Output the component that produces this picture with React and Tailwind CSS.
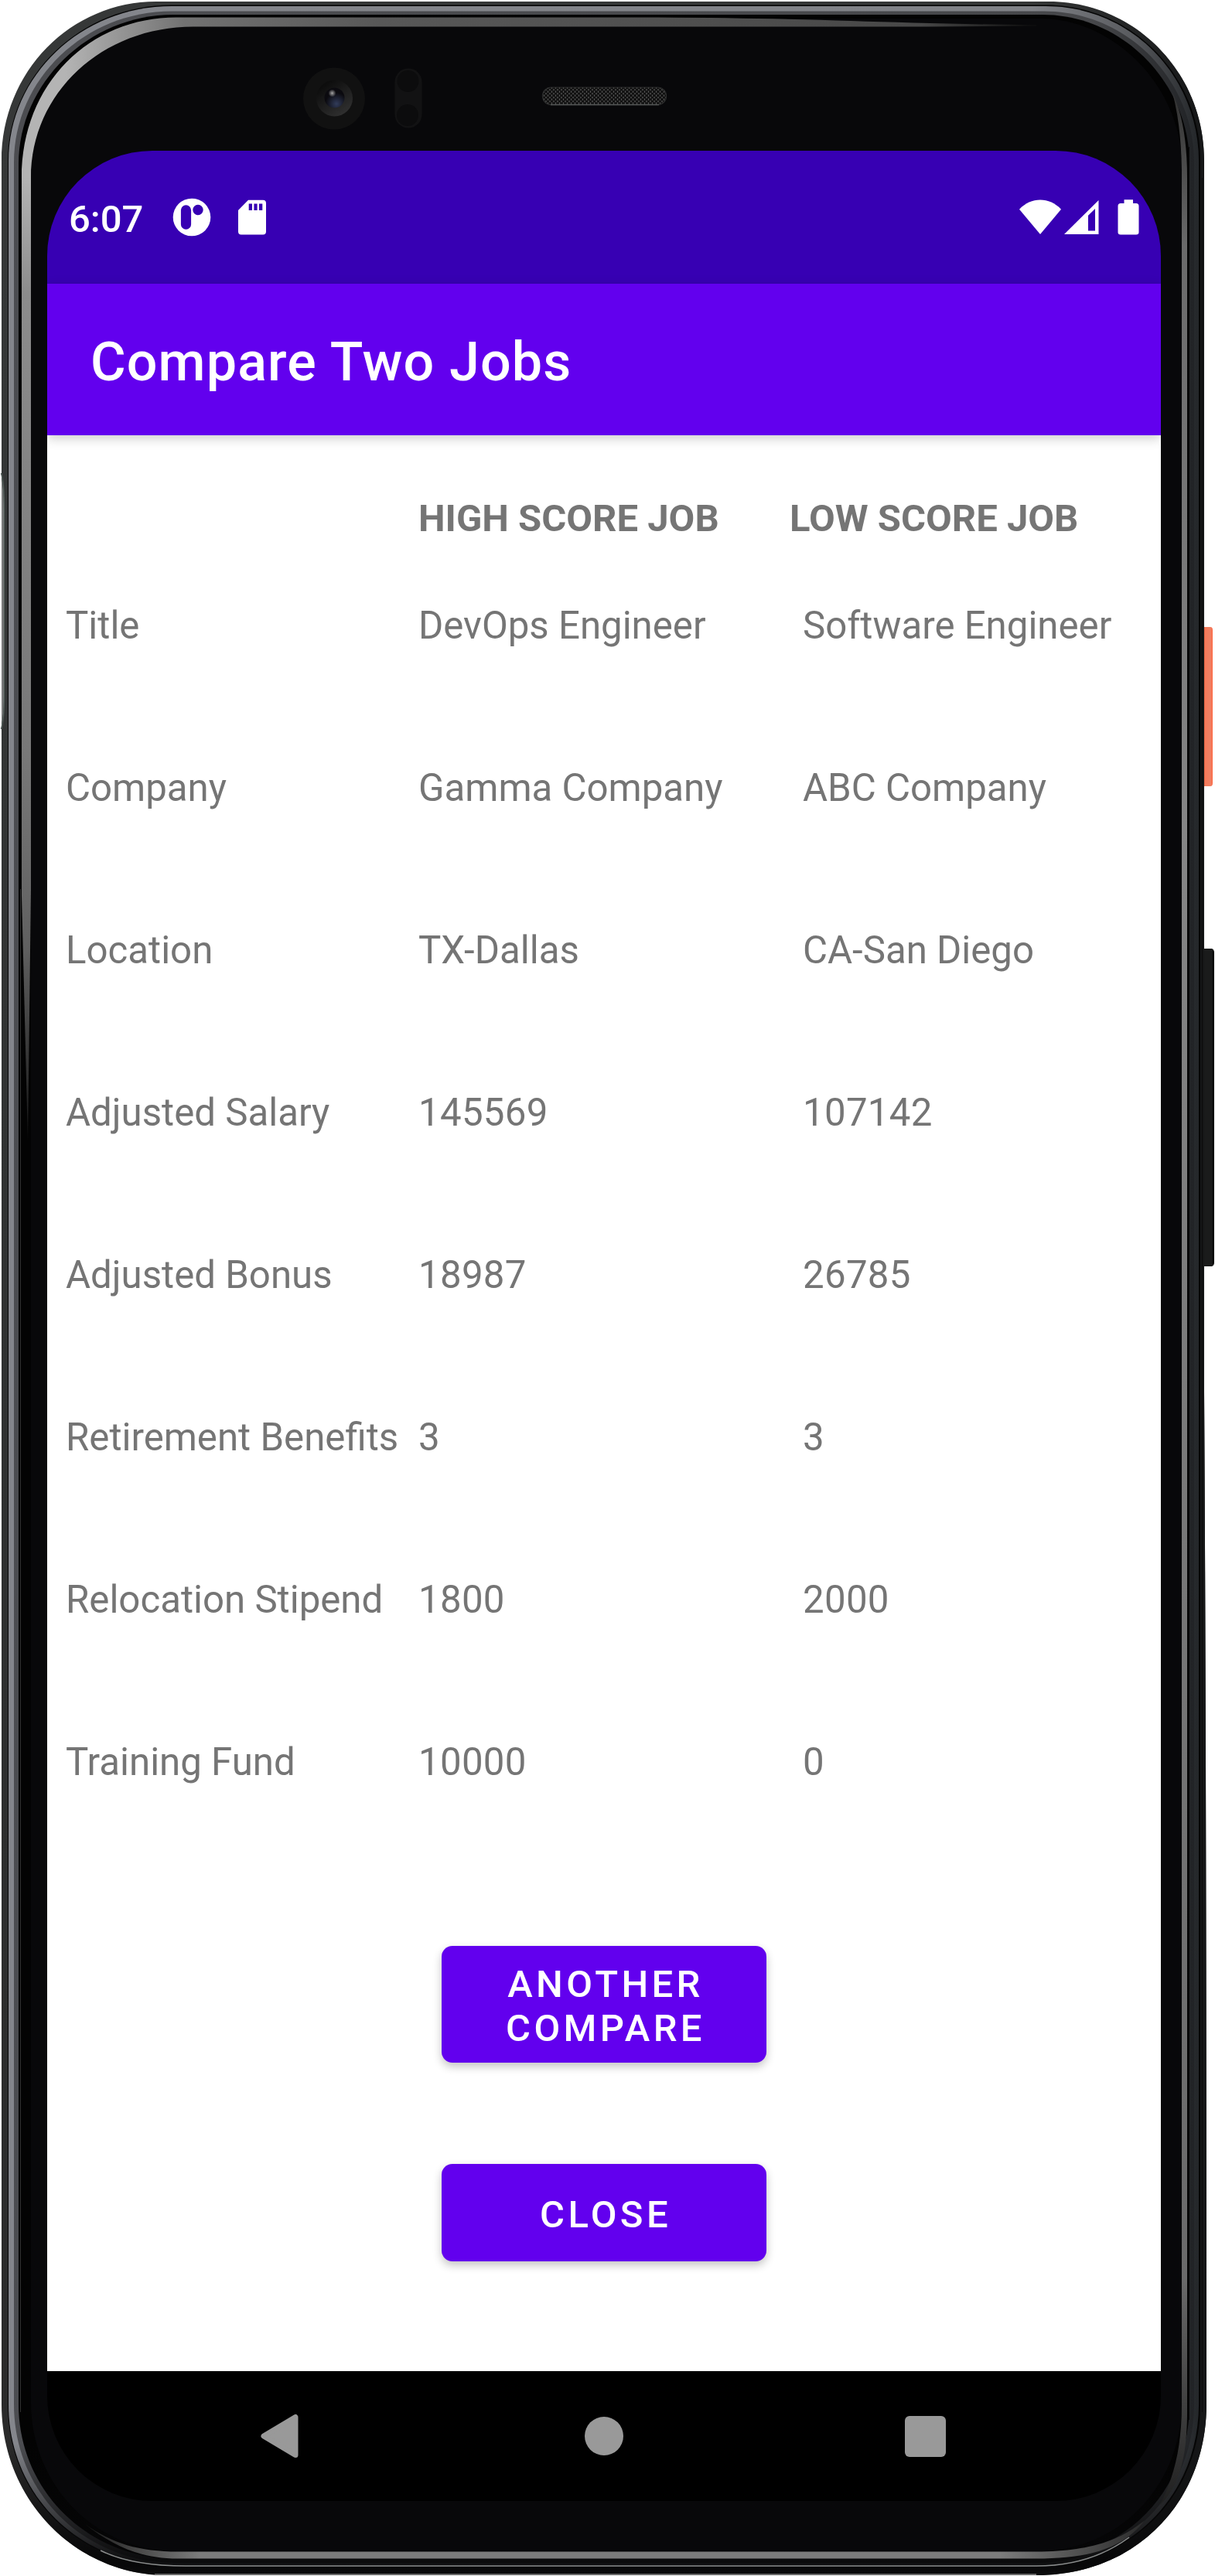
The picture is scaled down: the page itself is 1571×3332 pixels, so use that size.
const ROWS = [
  ["Title", "DevOps Engineer", "Software Engineer"],
  ["Company", "Gamma Company", "ABC Company"],
  ["Location", "TX-Dallas", "CA-San Diego"],
  ["Adjusted Salary", "145569", "107142"],
  ["Adjusted Bonus", "18987", "26785"],
  ["Retirement Benefits", "3", "3"],
  ["Relocation Stipend", "1800", "2000"],
  ["Training Fund", "10000", "0"],
];

const BODY =
  "M202 2H1356C1466 2 1557 92 1557 208V1800Q1560 2300 1560 3110C1560 3235 1470 3331 1340 3331H215C100 3331 2 3235 2 3110V208C2 92 92 2 202 2Z";

/* Device body: rim, polished band, glass edge, sensors and side keys. */
function PhoneFrame() {
  return (
    <svg className="absolute inset-0" width="1571" height="3332" viewBox="0 0 1571 3332" fill="none">
      <defs>
        <linearGradient id="rim" x1="0" y1="0" x2="0" y2="3332" gradientUnits="userSpaceOnUse">
          <stop offset="0" stopColor="#363838" />
          <stop offset="0.5" stopColor="#303232" />
          <stop offset="0.97" stopColor="#2a2a2a" />
          <stop offset="0.996" stopColor="#1c1c1c" />
          <stop offset="1" stopColor="#5a5a5a" />
        </linearGradient>
        <linearGradient id="rimShade" x1="0" y1="0" x2="1571" y2="0" gradientUnits="userSpaceOnUse">
          <stop offset="0.85" stopColor="#161718" stopOpacity="0" />
          <stop offset="0.985" stopColor="#161718" stopOpacity="1" />
        </linearGradient>
        <linearGradient id="band" x1="0" y1="0" x2="1571" y2="0" gradientUnits="userSpaceOnUse">
          <stop offset="0" stopColor="#84868c" />
          <stop offset="0.85" stopColor="#808287" />
          <stop offset="0.93" stopColor="#5a5c60" />
          <stop offset="0.985" stopColor="#25282b" />
        </linearGradient>
        <linearGradient id="bandInner" x1="0" y1="0" x2="1571" y2="0" gradientUnits="userSpaceOnUse">
          <stop offset="0" stopColor="#4c4d51" />
          <stop offset="0.9" stopColor="#46474a" />
          <stop offset="0.985" stopColor="#202225" />
        </linearGradient>
        <linearGradient id="glassTop" x1="0" y1="0" x2="1400" y2="0" gradientUnits="userSpaceOnUse">
          <stop offset="0.06" stopColor="#b4b4b4" />
          <stop offset="0.1" stopColor="#9c9c9c" />
          <stop offset="0.17" stopColor="#727272" />
          <stop offset="0.35" stopColor="#585858" />
          <stop offset="0.6" stopColor="#505050" />
          <stop offset="0.85" stopColor="#484848" />
          <stop offset="0.95" stopColor="#101010" />
        </linearGradient>
        <linearGradient id="glassLeft" x1="0" y1="230" x2="0" y2="1475" gradientUnits="userSpaceOnUse">
          <stop offset="0" stopColor="#b4b4b4" />
          <stop offset="0.12" stopColor="#8c8c8c" />
          <stop offset="0.6" stopColor="#787878" />
          <stop offset="0.8" stopColor="#606060" />
          <stop offset="1" stopColor="#151515" />
        </linearGradient>
        <linearGradient id="glassRight" x1="0" y1="130" x2="0" y2="3260" gradientUnits="userSpaceOnUse">
          <stop offset="0" stopColor="#333" />
          <stop offset="0.06" stopColor="#6a6a6a" />
          <stop offset="0.3" stopColor="#858585" />
          <stop offset="0.9" stopColor="#6a6a6a" />
          <stop offset="1" stopColor="#1a1a1a" />
        </linearGradient>
        <linearGradient id="glassBottom" x1="120" y1="0" x2="1500" y2="0" gradientUnits="userSpaceOnUse">
          <stop offset="0" stopColor="#222" />
          <stop offset="0.1" stopColor="#7c7c7c" />
          <stop offset="0.85" stopColor="#7c7c7c" />
          <stop offset="1" stopColor="#222" />
        </linearGradient>
        <linearGradient id="bottomFade" x1="0" y1="3160" x2="0" y2="3310" gradientUnits="userSpaceOnUse">
          <stop offset="0" stopColor="#060607" stopOpacity="0" />
          <stop offset="1" stopColor="#060607" stopOpacity="0.92" />
        </linearGradient>
        <linearGradient id="power" x1="1556" y1="0" x2="1568" y2="0" gradientUnits="userSpaceOnUse">
          <stop offset="0" stopColor="#e8603f" />
          <stop offset="0.25" stopColor="#f57b5c" />
          <stop offset="0.75" stopColor="#ee8065" />
          <stop offset="1" stopColor="#ff6a45" />
        </linearGradient>
        <radialGradient id="glint" cx="0.5" cy="0.5" r="0.5">
          <stop offset="0" stopColor="#a5a5a5" />
          <stop offset="1" stopColor="#a5a5a5" stopOpacity="0" />
        </radialGradient>
        <radialGradient id="lensBlue" cx="0.6" cy="0.8" r="0.55">
          <stop offset="0" stopColor="#323c5a" />
          <stop offset="1" stopColor="#0b0a0f" />
        </radialGradient>
        <linearGradient id="lensRing" x1="0" y1="0" x2="0.7" y2="1">
          <stop offset="0.2" stopColor="#0d0d0d" />
          <stop offset="1" stopColor="#303030" />
        </linearGradient>
        <pattern id="mesh" width="5" height="5" patternUnits="userSpaceOnUse">
          <rect width="5" height="5" fill="#111" />
          <path d="M1 0v2.200M3.500 2.500v2.200" stroke="#5c5c5c" strokeWidth="1.200" />
        </pattern>
      </defs>

      {/* side keys */}
      <path d="M1554 811h11q3 0 3 4v198q0 4-3 4h-11z" fill="url(#power)" />
      <path d="M1554 1227h13q3 1 3 5v401q0 4-3 5h-13z" fill="#1a1b1b" />
      <path d="M1568.500 1230v405" stroke="#050505" strokeWidth="1.500" />

      {/* outer rim */}
      <path d={BODY} fill="url(#rim)" />
      <path d={BODY} fill="url(#rimShade)" />
      <path d="M0 612Q5 625 5 660V900Q5 930 0 943Z" fill="#fff" fillOpacity="0.35" />
      <path d="M1.500 612Q5.500 625 5.500 660V900Q5.500 930 1.500 943" stroke="#4f5a56" strokeWidth="1.500" />

      {/* polished band */}
      <path d="M222 6.500H1352C1465 6.500 1552 100 1552 208V3110C1552 3230 1460 3320 1340 3320H225C104 3320 10 3230 10 3110V208C10 98 104 6.500 222 6.500Z" fill="#050505" />
      <path d="M222 8H1352C1464 8 1550 100 1550 208V3110C1550 3229 1459 3319 1340 3319H225C105 3319 11 3229 11 3110V208C11 98 105 8 222 8Z" fill="url(#band)" />
      <path d="M222 14.500H1350C1458 14.500 1544 104 1544 210V3110C1544 3225 1455 3315 1340 3315H227C110 3315 18 3226 18 3110V210C18 102 110 14.500 222 14.500Z" fill="url(#bandInner)" />
      <path d="M224 19H1348C1452 19 1538 108 1538 212V3110C1538 3222 1452 3310 1340 3310H229C114 3310 24 3222 24 3110V212C24 108 114 19 224 19Z" fill="#030303" />
      <path d="M2 3110H1560C1560 3235 1470 3331 1340 3331H215C100 3331 2 3235 2 3110Z" fill="url(#bottomFade)" />

      {/* glass body */}
      <path d="M228 24H1346C1440 24 1528 112 1528 214V3108C1528 3212 1450 3300 1340 3300H229C120 3300 40 3212 40 3108V214C40 112 130 24 228 24Z" fill="#08080a" />
      {/* glass edge highlights */}
      <path d="M28 230C28 108 116 22.500 228 22.500H850Q1000 23.500 1100 27T1340 32.500V33.500L1200 34.500H250C132 34.500 40 120 40 230Z" fill="url(#glassTop)" />
      <path d="M28 229H40V1150L36 1475L28 1158Z" fill="url(#glassLeft)" />
      <path d="M26.500 1150V3120" stroke="#2e2e2e" strokeWidth="1" />
      <path d="M1516 120Q1535 160 1535 230V3120C1535 3190 1520 3220 1500 3240C1520 3200 1528 3160 1528 3110V220Q1527 160 1516 120Z" fill="url(#glassRight)" />
      <path d="M1537.500 190V3130M1554.500 230V3120" stroke="#0a0a0a" strokeWidth="1" />
      <path d="M110 3265C145 3290 180 3300.500 230 3300.500H1340C1420 3300.500 1455 3280 1480 3260C1450 3300 1400 3309.500 1340 3309.500H230C180 3309.500 145 3292 110 3265Z" fill="url(#glassBottom)" />
      <path d="M130 3299Q170 3319 240 3319H1340Q1410 3319 1460 3282" stroke="#8b8d8d" strokeWidth="1.500" />
      <path d="M200 3330H1340" stroke="#6a6a6a" strokeWidth="2" />

      {/* front camera */}
      <circle cx="432" cy="127.500" r="40" fill="#111" />
      <circle cx="432.500" cy="127" r="23.500" fill="url(#lensRing)" />
      <circle cx="432.500" cy="126.500" r="13" fill="url(#lensBlue)" />
      <circle cx="429.500" cy="120.500" r="5" fill="url(#glint)" />
      {/* proximity sensor */}
      <rect x="510.500" y="88.500" width="35" height="77" rx="17.500" fill="#121213" />
      <circle cx="527.500" cy="105" r="14" fill="#0c0c0d" />
      <circle cx="527" cy="149" r="14" fill="#0c0c0d" />
      {/* earpiece */}
      <rect x="701.500" y="113" width="160" height="22.500" rx="11" fill="url(#mesh)" stroke="#2c2d2d" strokeWidth="1.200" />
      <path d="M712 135.500H852" stroke="#565858" strokeWidth="1.300" />
    </svg>
  );
}

function StatusBar() {
  return (
    <div className="flex h-[172px] items-center bg-[#3700b3] pl-[28px] pr-[28px] text-white">
      <span className="pt-[5px] text-[49px] leading-[58px] font-medium">6:07</span>
      <svg className="ml-[38px]" width="50" height="50" viewBox="0 0 50 50">
        <path
          fillRule="evenodd"
          fill="#fff"
          d="M25 .7a24.300 24.300 0 1 0 0 48.600a24.300 24.300 0 1 0 0-48.600zM17.500 9.200a6.600 6.600 0 0 1 6.600 6.600v18.400a6.600 6.600 0 0 1-13.200 0V15.800a6.600 6.600 0 0 1 6.600-6.600zM33 8.800a6.700 6.700 0 1 1 0 13.400a6.700 6.700 0 1 1 0-13.400z"
        />
      </svg>
      <svg className="ml-[34px]" width="38" height="46" viewBox="0 0 38 46">
        <path
          fillRule="evenodd"
          fill="#fff"
          d="M14 .7H33q4 0 4 4V41.500q0 4-4 4H5q-4 0-4-4V14zM14.700 5.500V14h4.300V5.500zM21.400 5.500V14h4.200V5.500zM28 5.500V14h4.300V5.500z"
        />
      </svg>
      <svg className="ml-auto" width="54" height="46" viewBox="0 0 54 46">
        <path fill="#fff" d="M0 12.700C15-3.600 39-3.600 54 12.700L27 45z" />
      </svg>
      <svg className="ml-[4px]" width="46" height="46" viewBox="0 0 46 46">
        <path fillRule="evenodd" fill="#fff" d="M0 45L44.500 1V45zM31 20.700V40.600H40V12z" />
      </svg>
      <svg className="ml-[23px]" width="28" height="46" viewBox="0 0 28 46">
        <path fill="#fff" d="M8.500.3H20V5H24q3.500 0 3.500 3.500V42.500q0 3-3.500 3H4q-3.500 0-3.500-3V8.500Q.5 5 4 5H8.500z" />
      </svg>
    </div>
  );
}

function NavBar() {
  return (
    <div className="flex h-[168px] items-center bg-black pl-[276px] pr-[278px]">
      <svg width="50" height="58" viewBox="0 0 50 58">
        <path d="M45 4.500V53.500L4 29z" fill="#999" stroke="#999" strokeWidth="7" strokeLinejoin="round" />
      </svg>
      <div className="ml-[369px] size-[50px] rounded-full bg-[#999]" />
      <div className="ml-auto size-[53px] rounded-[6px] bg-[#999]" />
    </div>
  );
}

function ActionButton({ children, className }) {
  return (
    <button
      className={`flex w-[420px] items-center justify-center rounded-[14px] bg-[#6200ee] pt-[4px] pr-[54px] pl-[58px] text-center text-[49px] leading-[57px] font-medium tracking-[4.375px] text-white shadow-[0_5px_12px_rgba(0,0,0,0.24)] ${className}`}
    >
      {children}
    </button>
  );
}

export default function App() {
  return (
    <div className="relative h-[3332px] w-[1571px] overflow-hidden bg-white pt-[195px] pl-[61px] font-['Roboto',sans-serif]">
      <PhoneFrame />
      <div className="relative flex h-[3040px] w-[1440px] flex-col overflow-hidden rounded-[136px]">
        <StatusBar />
        <header className="relative z-10 flex h-[196px] items-center bg-[#6200ee] pt-[5px] pl-[56px] shadow-[0_4px_14px_rgba(0,0,0,0.2)]">
          <h1 className="text-[70px] leading-[82px] font-medium tracking-[1.1px] text-white">Compare Two Jobs</h1>
        </header>
        <main className="flex flex-1 flex-col bg-white text-[49px] leading-[58px] text-[#757575]">
          <div className="mt-[79px] grid grid-cols-[480px_480px_1fr] font-bold">
            <span className="col-start-2">HIGH SCORE JOB</span>
            <span>LOW SCORE JOB</span>
          </div>
          <div className="mt-[80px] grid auto-rows-[210px] grid-cols-[456px_497px_1fr] pl-[24px] text-[49.2px]">
            {ROWS.flatMap((row) => row.map((cell, i) => (
              <span
                key={row[0] + i}
                className={/^\d+$/.test(cell) ? "tracking-[0.3px] whitespace-nowrap" : "whitespace-nowrap"}
              >
                {cell}
              </span>
            )))}
          </div>
          <div className="mt-[57px] flex flex-col items-center gap-[131px]">
            <ActionButton className="h-[151px]">ANOTHER COMPARE</ActionButton>
            <ActionButton className="h-[126px]">CLOSE</ActionButton>
          </div>
        </main>
        <NavBar />
      </div>
    </div>
  );
}
